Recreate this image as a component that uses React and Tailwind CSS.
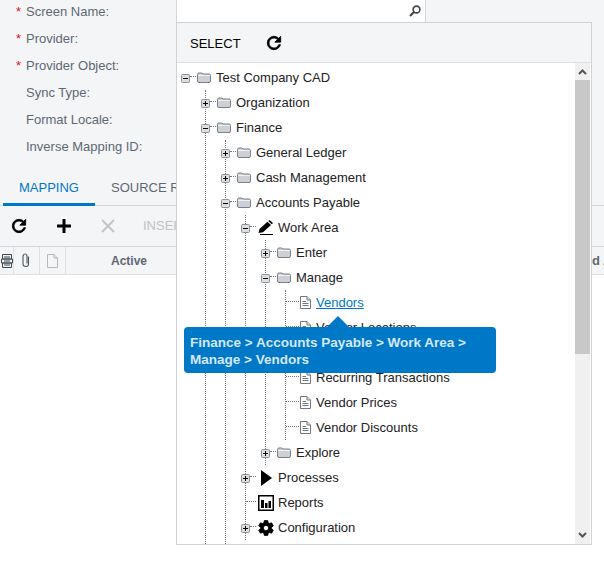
import React from "react";

const RefreshIcon = ({ className }) => (
    <svg width="20" height="20" viewBox="0 0 24 24" className={`block shrink-0 ${className}`}>
        <path
            d="M17.65 6.35C16.2 4.9 14.21 4 12 4c-4.42 0-7.99 3.58-7.99 8s3.57 8 7.99 8c3.73 0 6.84-2.55 7.73-6h-2.08c-.82 2.33-3.04 4-5.65 4-3.31 0-6-2.69-6-6s2.69-6 6-6c1.66 0 3.14.69 4.22 1.78L13 11h7V4l-2.35 2.35z"
            fill="#000"
            stroke="#000"
            strokeWidth="1"
        />
    </svg>
);

const FolderIcon = () => (
    <svg width="14" height="11" viewBox="0 0 14 11" className="block shrink-0">
        <path d="M.5 2.5 Q.5 1 2 1 H5 L6 2 H12 Q13.5 2 13.5 3.5 V9 Q13.5 10.5 12 10.5 H2 Q.5 10.5 .5 9 Z" fill="#cdd0d4" stroke="#78818a" />
        <path d="M1 3.5 H13" stroke="#eef0f1" />
    </svg>
);

const DocIcon = () => (
    <svg width="11" height="13" viewBox="0 0 11 13" className="block shrink-0">
        <path d="M.5 .5 H7 L10.5 4 V12.5 H.5 Z" fill="#fff" stroke="#707880" />
        <path d="M7 .5 V4 H10.5" fill="#dfe1e3" stroke="#707880" />
        <path d="M2.5 5.5 H6 M2.5 7.5 H8.5 M2.5 9.5 H8.5" stroke="#707880" />
    </svg>
);

const PencilIcon = () => (
    <svg width="16" height="15" viewBox="0 0 16 15" className="block shrink-0">
        <path d="M.5 13 L1.5 9 L9.5 1.8 L13 5 L5 12.3 Z M10.3 1 L11.5 0 L15 3 L13.8 4.2 Z" fill="#000" />
        <path d="M2 14.5 H15" stroke="#000" />
    </svg>
);

const PlayIcon = () => (
    <svg width="16" height="16" viewBox="0 0 16 16" className="block shrink-0">
        <path d="M3 0 L14 8 L3 16 Z" fill="#000" />
    </svg>
);

const ReportIcon = () => (
    <svg width="16" height="16" viewBox="0 0 16 16" className="block shrink-0">
        <rect x=".75" y=".75" width="14.5" height="14.5" fill="#fff" stroke="#000" strokeWidth="1.5" />
        <path d="M3 5 H6 V13 H3 Z M7 8 H9.5 V13 H7 Z M10.5 6 H13 V13 H10.5 Z" fill="#000" />
    </svg>
);

const GearIcon = () => (
    <svg width="18" height="18" viewBox="0 0 24 24" className="block shrink-0">
        <path
            d="M19.43 12.98c.04-.32.07-.64.07-.98s-.03-.66-.07-.98l2.11-1.65c.19-.15.24-.42.12-.64l-2-3.46c-.12-.22-.39-.3-.61-.22l-2.49 1c-.52-.4-1.08-.73-1.69-.98l-.38-2.65C14.46 2.18 14.25 2 14 2h-4c-.25 0-.46.18-.49.42l-.38 2.65c-.61.25-1.17.59-1.69.98l-2.49-1c-.23-.09-.49 0-.61.22l-2 3.46c-.13.22-.07.49.12.64l2.11 1.65c-.04.32-.07.65-.07.98s.03.66.07.98l-2.11 1.65c-.19.15-.24.42-.12.64l2 3.46c.12.22.39.3.61.22l2.49-1c.52.4 1.08.73 1.69.98l.38 2.65c.03.24.24.42.49.42h4c.25 0 .46-.18.49-.42l.38-2.65c.61-.25 1.17-.59 1.69-.98l2.49 1c.23.09.49 0 .61-.22l2-3.46c.12-.22.07-.49-.12-.64l-2.11-1.65zM12 15.5c-1.93 0-3.5-1.57-3.5-3.5s1.57-3.5 3.5-3.5 3.5 1.57 3.5 3.5-1.57 3.5-3.5 3.5z"
            fill="#000"
            stroke="#000"
            strokeWidth="1"
        />
    </svg>
);

const Chevron = ({ up }) => (
    <svg width="9" height="7" viewBox="0 0 9 7" className="block">
        <path d={up ? "M1 6 L4.5 2.5 L8 6" : "M1 1 L4.5 4.5 L8 1"} fill="none" stroke="#555" strokeWidth="2" />
    </svg>
);

const Toggle = ({ open }) => (
    <svg width="9" height="9" viewBox="0 0 9 9" className="block shrink-0 -ml-[5px] mt-[2px]">
        <rect x=".5" y=".5" width="8" height="8" rx="1" fill="#dcdee0" stroke="#8b9199" />
        <path d={open ? "M2 4.5 H7" : "M2 4.5 H7 M4.5 2 V7"} stroke="#000" />
    </svg>
);

const icons = { folder: FolderIcon, doc: DocIcon, pencil: PencilIcon, play: PlayIcon, report: ReportIcon, gear: GearIcon };

const tree = {
    label: "Test Company CAD",
    open: true,
    runsOn: true,
    children: [
        { label: "Organization" },
        {
            label: "Finance",
            open: true,
            runsOn: true,
            children: [
                { label: "General Ledger" },
                { label: "Cash Management" },
                {
                    label: "Accounts Payable",
                    open: true,
                    children: [
                        {
                            label: "Work Area",
                            icon: "pencil",
                            open: true,
                            children: [
                                { label: "Enter" },
                                {
                                    label: "Manage",
                                    open: true,
                                    children: [
                                        { label: "Vendors", icon: "doc", leaf: true, link: true },
                                        { label: "Vendor Locations", icon: "doc", leaf: true },
                                        { label: "", icon: "doc", leaf: true },
                                        { label: "Recurring Transactions", icon: "doc", leaf: true },
                                        { label: "Vendor Prices", icon: "doc", leaf: true },
                                        { label: "Vendor Discounts", icon: "doc", leaf: true },
                                    ],
                                },
                                { label: "Explore" },
                            ],
                        },
                        { label: "Processes", icon: "play" },
                        { label: "Reports", icon: "report", leaf: true },
                        { label: "Configuration", icon: "gear" },
                    ],
                },
            ],
        },
    ],
};

const Connector = ({ width }) => (
    <span className={`block shrink-0 border-t border-dotted border-[#777] -mt-[2px] ${width}`} />
);

const TreeRow = ({ node }) => {
    const Icon = icons[node.icon || "folder"];
    const big = ["pencil", "play", "report", "gear"].includes(node.icon);
    return (
        <div className="flex items-center h-[25px] whitespace-nowrap">
            {node.leaf ? (
                <Connector width={big ? "w-[10px]" : "w-[13px]"} />
            ) : (
                <>
                    <Toggle open={node.open} />
                    <Connector width="w-[6px]" />
                </>
            )}
            <span className={`flex justify-center shrink-0 ${big ? "w-[18px] ml-[1px]" : node.leaf ? "w-[11px] ml-[1px]" : "w-[14px] ml-[1px]"}`}>
                <Icon />
            </span>
            <span className={`${big ? "ml-[3px]" : "ml-[5px]"} ${node.link ? "text-[#0078c8] underline" : "text-[#222]"}`}>
                {node.label}
            </span>
        </div>
    );
};

const TreeNode = ({ node }) => (
    <>
        <TreeRow node={node} />
        {node.children && (
            <div className={`ml-[19px] ${node.runsOn ? "" : "pb-[12px]"}`}>
                <ul className={`border-l border-dotted border-[#777] ${node.runsOn ? "pb-[40px]" : ""}`}>
                    {node.children.map((child, i) => (
                        <li key={i} className={!node.runsOn && i === node.children.length - 1 ? "-mb-[12px]" : ""}>
                            <TreeNode node={child} />
                        </li>
                    ))}
                </ul>
            </div>
        )}
    </>
);

const fields = [
    { label: "Screen Name:", required: true },
    { label: "Provider:", required: true },
    { label: "Provider Object:", required: true },
    { label: "Sync Type:" },
    { label: "Format Locale:" },
    { label: "Inverse Mapping ID:" },
];

export default function App() {
    return (
        <div className="relative w-[604px] h-[564px] overflow-hidden bg-white text-[13px] leading-[16px] font-['Liberation_Sans',Arial,sans-serif]">
            {/* Page behind the dropdown */}
            <div className="bg-[#f4f5f7] text-[#5e6873]">
                <div className="-mt-[2px] pl-[16px] pb-[12px]">
                    {fields.map((f) => (
                        <div key={f.label} className="flex items-center h-[27px]">
                            <span className="w-[10px] text-[#e8112d]">{f.required ? "*" : ""}</span>
                            <span>{f.label}</span>
                        </div>
                    ))}
                </div>
                <div className="flex h-[34px] border-b border-[#d4d6d9]">
                    <div className="ml-[3px] w-[92px] h-[34px] shrink-0 flex items-center justify-center border-b-[3px] border-[#0078c8] text-[#0078c8]">
                        MAPPING
                    </div>
                    <div className="ml-[16px] flex items-center h-[33px] pb-[2px] whitespace-nowrap">SOURCE R</div>
                </div>
                <div className="flex items-center h-[41px] border-b border-[#d4d6d9]">
                    <RefreshIcon className="ml-[9px]" />
                    <svg width="14" height="14" viewBox="0 0 14 14" className="ml-[28px] shrink-0">
                        <path d="M5.5 0 H8.5 V5.5 H14 V8.5 H8.5 V14 H5.5 V8.5 H0 V5.5 H5.5 Z" fill="#000" />
                    </svg>
                    <svg width="14" height="14" viewBox="0 0 14 14" className="ml-[30px] shrink-0">
                        <path d="M1 1 L13 13 M13 1 L1 13" stroke="#c4c6c9" strokeWidth="2.2" />
                    </svg>
                    <span className="ml-[28px] text-[#c0c2c5]">INSER</span>
                </div>
                <div className="flex h-[28px] border-b border-[#dfe1e3] font-bold">
                    <div className="w-[14px] shrink-0 flex items-center border-r border-[#dfe1e3]">
                        <svg width="12" height="14" viewBox="0 0 12 14" className="ml-[1px]">
                            <path d="M1.5 .5 H10.5 V5 H1.5 Z M.5 5 H11.5 V9 H.5 Z M1.5 9 H10.5 V13.5 H1.5 Z" fill="none" stroke="#3d4650" />
                            <path d="M3 3 H9 M3 7 H9 M3 11 H9" stroke="#3d4650" />
                        </svg>
                    </div>
                    <div className="w-[26px] shrink-0 flex items-center justify-center border-r border-[#dfe1e3]">
                        <svg width="9" height="15" viewBox="0 0 9 15">
                            <path d="M6.5 3.5 V11 Q6.5 13.5 4 13.5 Q1 13.5 1 11 V3.5 Q1 1 3.2 1 Q5 1 5 3.5 V10.5" fill="none" stroke="#4a5560" strokeWidth="1.1" />
                        </svg>
                    </div>
                    <div className="w-[26px] shrink-0 flex items-center justify-center border-r border-[#dfe1e3]">
                        <svg width="11" height="14" viewBox="0 0 11 14">
                            <path d="M.5 .5 H7 L10.5 4 V13.5 H.5 Z M7 .5 V4 H10.5" fill="none" stroke="#b5b9bd" />
                        </svg>
                    </div>
                    <div className="w-[126px] shrink-0 flex items-center justify-center text-[12px]">Active</div>
                    <div className="shrink-0 flex items-center pl-[400px] whitespace-nowrap">d A</div>
                </div>
            </div>

            {/* Dropdown panel */}
            <div className="absolute left-[176px] top-0 w-[416px] h-[545px] flex flex-col">
                <div className="w-[250px] h-[22px] shrink-0 flex items-center justify-end pr-[4px] bg-white border-l border-r border-[#d4d6d9]">
                    <svg width="12" height="12" viewBox="0 0 12 12">
                        <circle cx="7.5" cy="4.5" r="3.4" fill="none" stroke="#444" strokeWidth="1.6" />
                        <path d="M5 7 L1 11" stroke="#444" strokeWidth="2.2" />
                    </svg>
                </div>
                <div className="flex-1 min-h-0 flex flex-col bg-white border border-[#d0d2d5]">
                    <div className="flex items-center h-[40px] shrink-0 bg-[#f4f5f7] border-b border-[#dfe1e3] text-black">
                        <span className="ml-[13px] mt-[2px]">SELECT</span>
                        <RefreshIcon className="ml-[23px]" />
                    </div>
                    <div className="flex-1 min-h-0 flex">
                        <div className="flex-1 overflow-hidden pl-[9px] pt-[2px]">
                            <TreeNode node={tree} />
                        </div>
                        <div className="w-[15px] mr-[1px] flex flex-col bg-[#f0f0f0]">
                            <div className="h-[17px] flex items-center justify-center">
                                <Chevron up />
                            </div>
                            <div className="h-[274px] bg-[#c8c8c8]" />
                            <div className="flex-1" />
                            <div className="h-[17px] flex items-center justify-center">
                                <Chevron />
                            </div>
                        </div>
                    </div>
                </div>
            </div>

            {/* Path tooltip */}
            <div className="absolute left-[184px] top-[327px] w-[312px] h-[46px] rounded-[4px] bg-[#0078c8] px-[6px] py-[7px] font-bold text-[13.5px] text-[#d4e8f8] leading-[17px]">
                Finance &gt; Accounts Payable &gt; Work Area &gt; Manage &gt; Vendors
                <div className="absolute left-[143px] -top-[11px] w-0 h-0 border-x-[11px] border-x-transparent border-b-[11px] border-b-[#0078c8]" />
            </div>
        </div>
    );
}
